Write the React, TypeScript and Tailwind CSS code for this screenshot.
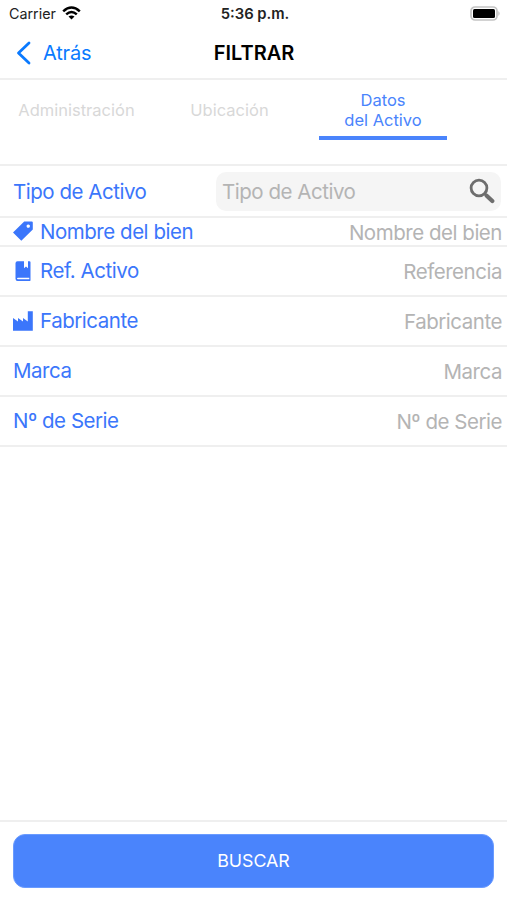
import { ReactNode } from "react";

type FieldProps = {
	label: string;
	placeholder: string;
	height: string;
	icon?: ReactNode;
};

const TagIcon = () => (
	<svg className="mb-px h-5 w-5" viewBox="0 0 20 20" fill="#3b76fb">
		<path fillRule="evenodd" d="M11.2.4H18.800Q19.800.4 19.800 1.400V8.600L8.300 19.800 0 11.500ZM15.200 3.400a1.700 1.700 0 1 0 .1 0Z" />
	</svg>
);

const BookIcon = () => (
	<svg className="mb-px h-5 w-5" viewBox="0 0 20 20" fill="#3b76fb">
		<path
			fillRule="evenodd"
			d="M4.500.3H11v7l2-1.800 2 1.800v-7h1.500q1 0 1 1v18q0 .6-.6.6H4.600Q2.500 19.900 2.500 17.700V2.300Q2.500.3 4.500.3ZM5 16.700Q4 16.700 4 17.500T5 18.300H16.300V16.700Z"
		/>
	</svg>
);

const FactoryIcon = () => (
	<svg className="mb-px h-5 w-5" viewBox="0 0 20 20" fill="#3b76fb">
		<path d="M0 19.800V7L5 10.500V7L10 10.500V7L14.800 10.500V.2H19.800V19.800Z" />
	</svg>
);

const Field = ({ label, placeholder, height, icon }: FieldProps) => (
	<div className={`${height} flex items-center justify-between border-b-2 border-[#efefef] pl-[13px] pr-[5px] text-[20.5px] leading-6 tracking-[-0.47px] whitespace-nowrap`}>
		<label className="flex items-center text-[#3b76fb]">
			{icon && <span className="w-[27px]">{icon}</span>}
			<span>{label}</span>
		</label>
		<span className="pt-0.5 text-[#b4b4b4]">{placeholder}</span>
	</div>
);

const App: React.FC = () => {
	return (
		<div className="flex h-[900px] w-[507px] flex-col bg-white font-['Inter','Liberation_Sans',sans-serif]">
			{/* status bar */}
			<div className="grid h-[27px] grid-cols-3 items-center pl-[9px] pr-[6px] text-[14.3px] text-[#222]">
				<div className="flex items-center gap-[6px]">
					<span>Carrier</span>
					<svg className="mb-0.5 h-[14px] w-[19px]" viewBox="0 0 19 14" fill="none" stroke="#000" strokeWidth="2.500">
						<path d="M1.200 5.300Q9.500-2.300 17.800 5.300M4.200 8.400Q9.500 3.600 14.800 8.400" />
						<path d="M6.500 10.600Q9.500 8.200 12.500 10.600L9.500 13.500Z" fill="#000" stroke="none" />
					</svg>
				</div>
				<span className="pt-0.5 text-center text-[14.8px] font-semibold">5:36 p.m.</span>
				<svg className="mb-px h-[15px] w-[31px] justify-self-end" viewBox="0 0 31 15">
					<rect x="1" y="1" width="26" height="13" rx="4" fill="#fff" stroke="#c4c4c4" strokeWidth="1.700" />
					<rect x="3" y="3" width="22" height="9" rx="1.500" fill="#000" />
					<path d="M28.500 5q2 2.500 0 5Z" fill="#aaa" />
				</svg>
			</div>

			<header className="grid h-[53px] grid-cols-3 items-center border-b-2 border-[#efefef] pl-4 pr-[15px]">
				<button className="flex items-center text-[20px] tracking-[-0.2px] text-[#0a7aff]">
					<svg className="mr-[12px] h-6 w-[15px]" viewBox="0 0 15 24" fill="none" stroke="#0a7aff" strokeWidth="2.800" strokeLinecap="round" strokeLinejoin="round">
						<path d="M13 2 2.500 12 13 22" />
					</svg>
					Atrás
				</button>
				<h1 className="text-center text-[20px] font-semibold text-black">FILTRAR</h1>
			</header>

			<nav className="flex h-[86px] items-start border-b-2 border-[#efefef] text-center text-[16.5px] leading-5 text-[#d8d8d8]">
				<span className="w-[153px] pt-5">Administración</span>
				<span className="w-[153px] pt-5">Ubicación</span>
				<span className="ml-[13px] h-[60px] w-[128px] border-b-4 border-[#4a84fc] pt-[10px] text-[#4a84fc]">
					Datos
					<br />
					del Activo
				</span>
			</nav>

			<div className="flex h-[52px] items-center justify-between border-b-2 border-[#efefef] pl-[13px] pr-[6px] text-[20.5px] leading-6 tracking-[-0.47px] whitespace-nowrap">
				<label className="pt-0.5 text-[#3b76fb]">Tipo de Activo</label>
				<div className="flex h-[39px] w-[285px] items-center justify-between rounded-[10px] bg-[#f5f5f5] pl-[6px] pr-[6px] text-[#b4b4b4]">
					<span className="pt-0.5">Tipo de Activo</span>
					<svg className="h-[26px] w-[26px]" viewBox="0 0 26 26" fill="none" stroke="#6e6e6e">
						<circle cx="10" cy="10" r="7.900" strokeWidth="2.800" />
						<path d="m15.500 15.500 2 2" strokeWidth="2.800" />
						<path d="m17.700 17.700 5.600 5.300" strokeWidth="4.200" strokeLinecap="round" />
					</svg>
				</div>
			</div>
			<Field label="Nombre del bien" placeholder="Nombre del bien" height="h-[29px]" icon={<TagIcon />} />
			<Field label="Ref. Activo" placeholder="Referencia" height="h-[50px]" icon={<BookIcon />} />
			<Field label="Fabricante" placeholder="Fabricante" height="h-[50px]" icon={<FactoryIcon />} />
			<Field label="Marca" placeholder="Marca" height="h-[50px]" />
			<Field label="Nº de Serie" placeholder="Nº de Serie" height="h-[50px]" />

			<footer className="mt-auto h-[80px] border-t-2 border-[#efefef] px-[13px] pt-3">
				<button className="h-[54px] w-full rounded-[12px] border border-[#6a9bff] bg-[#4a84fc] text-[17.800px] text-white">BUSCAR</button>
			</footer>
		</div>
	);
};

export default App;
